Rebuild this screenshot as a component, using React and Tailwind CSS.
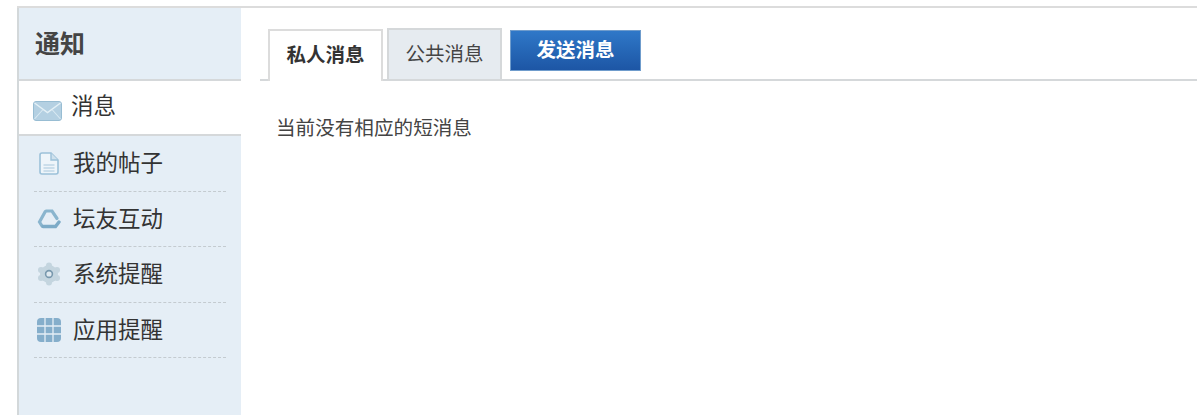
import React from 'react';

const cjk = "font-['Liberation_Sans','Noto_Sans_CJK_SC',sans-serif]";

const MailIcon = () => (
  <svg width="29" height="20" viewBox="0 0 29 20">
    <rect x="0.5" y="0.5" width="28" height="19" rx="2.5" fill="#b4d0e2" stroke="#98bdd3" />
    <path d="M1.5 2 L14.5 11.5 L27.5 2" fill="none" stroke="#e4f0f6" strokeWidth="1.5" />
    <path d="M1.5 18 L10 8.5 M27.5 18 L19 8.5" fill="none" stroke="#d9e9f2" strokeWidth="1.1" />
  </svg>
);

const PostIcon = () => (
  <svg width="20" height="23" viewBox="0 0 20 23">
    <path d="M3 1 H12 L19 8 V20 a2 2 0 0 1 -2 2 H3 a2 2 0 0 1 -2 -2 V3 a2 2 0 0 1 2 -2 Z" fill="#eef5fa" stroke="#9cc1d9" strokeWidth="1.6" />
    <path d="M12 1 V8 H19" fill="#cfe1ed" stroke="#9cc1d9" strokeWidth="1.4" />
    <path d="M4.5 13 H15.5 M4.5 16 H15.5 M4.5 19 H15.5" stroke="#a8c8dc" strokeWidth="1.2" />
  </svg>
);

const FriendIcon = () => (
  <svg width="24" height="20" viewBox="0 0 24 20">
    <path d="M9 2 H15 L20 9.5" fill="none" stroke="#8ab5ce" strokeWidth="3.2" strokeLinecap="round" />
    <path d="M8 3 L2.5 13 L5 17" fill="none" stroke="#8ab5ce" strokeWidth="3.2" strokeLinecap="round" />
    <path d="M6 17.5 H18.5 L22 13" fill="none" stroke="#7dabc7" strokeWidth="3.4" strokeLinecap="round" />
  </svg>
);

const GearIcon = () => (
  <svg width="24" height="24" viewBox="0 0 24 24">
    <g fill="#c4d5df">
      <circle cx="12" cy="3.5" r="3" />
      <circle cx="12" cy="20.5" r="3" />
      <circle cx="4" cy="8" r="3" />
      <circle cx="20" cy="8" r="3" />
      <circle cx="4" cy="16" r="3" />
      <circle cx="20" cy="16" r="3" />
      <circle cx="12" cy="12" r="9" />
    </g>
    <circle cx="12" cy="12" r="3.4" fill="#dfe9ef" stroke="#7898ad" strokeWidth="1.6" />
  </svg>
);

const AppIcon = () => (
  <svg width="24" height="24" viewBox="0 0 24 24">
    <rect width="24" height="24" rx="4" fill="#85aecb" />
    <path d="M8 0 V24 M16 0 V24 M0 8 H24 M0 16 H24" stroke="#e5eef6" strokeWidth="1.3" />
  </svg>
);

const navItems = [
  { label: '我的帖子', icon: <PostIcon /> },
  { label: '坛友互动', icon: <FriendIcon /> },
  { label: '系统提醒', icon: <GearIcon /> },
  { label: '应用提醒', icon: <AppIcon /> },
];

export default function App() {
  return (
    <div className={`w-[1197px] h-[415px] overflow-hidden bg-white pt-[6px] pl-[17px] ${cjk}`}>
      <div className="flex h-[409px] border-t-2 border-[#dcdcdc]">
        {/* Sidebar */}
        <div className="w-[224px] shrink-0 bg-[#e5eef6] border-l-2 border-[#d3d8da] flex flex-col">
          <div className="h-[73px] shrink-0 flex items-center pl-[16px] pt-[2px] border-b-2 border-[#d5d8da] text-[25px] font-bold text-[#444]">
            通知
          </div>
          <div className="h-[55px] shrink-0 flex items-center bg-white border-b-2 border-[#d5d8da] pl-[14px] gap-[9px] text-[22.5px] text-[#333]">
            <span className="mt-[6px] flex"><MailIcon /></span>
            <span className="-mt-[1px]">消息</span>
          </div>
          <ul className="pl-[15px] pr-[15px]">
            {navItems.map((item) => (
              <li key={item.label} className="h-[55.6px] flex items-center border-b border-dashed border-[#c4cbd0] text-[22.5px] text-[#333]">
                <span className="ml-[3px] mr-[12px] w-[24px] flex justify-center shrink-0">{item.icon}</span>
                <span className="mt-[1px]">{item.label}</span>
              </li>
            ))}
          </ul>
        </div>

        {/* Content */}
        <div className="flex-1 pl-[19px]">
          <div className="h-[73px] flex items-end border-b-2 border-[#d5d8da] pl-[8px]">
            <div className="w-[115px] h-[52px] -mb-[2px] bg-white border-2 border-b-0 border-[#dcdcdc] flex items-center justify-center text-[19.5px] font-bold text-[#333]">
              私人消息
            </div>
            <div className="w-[115px] h-[51px] ml-[4px] bg-[#e6ebf0] border-2 border-b-0 border-[#d5d8da] flex items-center justify-center text-[19.5px] text-[#444]">
              公共消息
            </div>
            <div className="w-[131px] h-[41px] ml-[8px] mb-[8px] bg-gradient-to-b from-[#2f78c8] to-[#1d56a5] border border-[#6f9ccc] flex items-center justify-center text-[19.5px] font-bold text-white">
              发送消息
            </div>
          </div>
          <p className="mt-[33px] pl-[16px] text-[19.6px] leading-[28px] text-[#444]">当前没有相应的短消息</p>
        </div>
      </div>
    </div>
  );
}
